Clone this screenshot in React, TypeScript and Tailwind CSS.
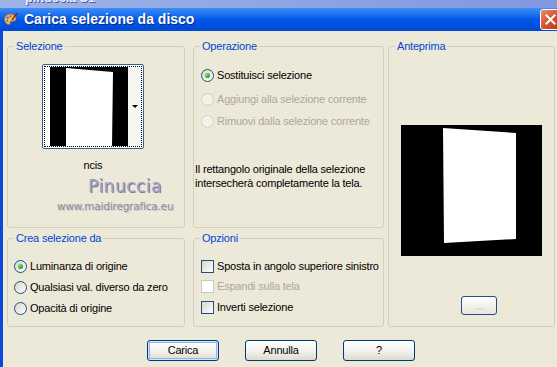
import type { ReactNode } from "react";

const FONT = "font-['Liberation_Sans',Arial,sans-serif]";

function Radio({ checked = false, disabled = false }: { checked?: boolean; disabled?: boolean }) {
  return (
    <span
      className={
        disabled
          ? "flex h-[13px] w-[13px] shrink-0 items-center justify-center rounded-full border border-[#D3D0C2] bg-[#F3F1EA]"
          : "flex h-[13px] w-[13px] shrink-0 items-center justify-center rounded-full border border-[#1C5180] bg-linear-135 from-[#D6D5CC] to-white"
      }
    >
      {checked && <span className="h-[5px] w-[5px] rounded-full bg-[radial-gradient(circle_at_35%_35%,#7FE07F,#21A121_70%)]" />}
    </span>
  );
}

function Check({ disabled = false }: { disabled?: boolean }) {
  return (
    <span
      className={
        disabled
          ? "h-[13px] w-[13px] shrink-0 border border-[#CAC8BB] bg-white"
          : "h-[13px] w-[13px] shrink-0 border border-[#1C5180] bg-linear-135 from-[#D6D5CC] to-white"
      }
    />
  );
}

function Group({ label, className, children }: { label: string; className: string; children?: ReactNode }) {
  return (
    <fieldset className={`min-w-0 rounded-[3px] border border-[#D0D0BF] ${className}`}>
      <legend className="ml-[6px] px-[2px] leading-[13px] text-[#0046D5]">{label}</legend>
      {children}
    </fieldset>
  );
}

function Row({ children, disabled = false, className }: { children: ReactNode; disabled?: boolean; className: string }) {
  return (
    <div className={`flex h-[13px] items-center gap-[3px] leading-[13px] ${disabled ? "text-[#ACA899]" : "text-black"} ${className}`}>
      {children}
    </div>
  );
}

function PaletteIcon() {
  return (
    <svg width={15} height={15} viewBox="0 0 16 16" aria-hidden>
      <path d="M8 2C4 2 1.5 4.6 1.5 8c0 3 2.3 5.5 5 5.5 1.3 0 1.6-.9 1.2-1.8-.4-.9.1-1.7 1.2-1.7h1.6c2.2 0 3.5-1.4 3.5-3.3C14 4 11.5 2 8 2z" fill="#F2B36A" stroke="#9A5A22" strokeWidth={0.8} />
      <circle cx={5} cy={6} r={1.2} fill="#2A6BE8" />
      <circle cx={8} cy={4.6} r={1.1} fill="#E03B2A" />
      <circle cx={4.4} cy={9.4} r={1.1} fill="#39A33A" />
      <path d="M15 1.5 10 8" stroke="#5A3A1A" strokeWidth={1.4} strokeLinecap="round" />
    </svg>
  );
}

function XpButton({ label, isDefault = false }: { label: string; isDefault?: boolean }) {
  return (
    <button
      className={
        isDefault
          ? "h-[21px] w-[72px] rounded-[3px] border border-[#003C74] bg-linear-to-b from-white via-[#F4F3EE] to-[#DEDBD0] leading-[13px] text-black shadow-[inset_0_0_0_1px_#CEE7FF,inset_0_0_0_2px_#8DB2F0]"
          : "h-[21px] w-[72px] rounded-[3px] border border-[#003C74] bg-linear-to-b from-white via-[#F4F3EE] to-[#DEDBD0] leading-[13px] text-black"
      }
    >
      {label}
    </button>
  );
}

export default function App() {
  return (
    <div className={`h-[367px] w-[557px] overflow-hidden bg-[#ECE9D8] text-[11px] tracking-[-0.2px] ${FONT}`}>
      {/* window behind */}
      <div className="h-[8px] overflow-hidden bg-linear-to-r from-[#9FB2E8] via-[#8EA6E4] to-[#7F98E0]">
        <span className="-mt-[10px] ml-[25px] block text-[13px] font-bold leading-[15px] text-[#E8EEFF] [text-shadow:1px_1px_#4A5C9A]">pinuccia S1</span>
      </div>

      {/* title bar */}
      <div className="flex h-[23px] items-center bg-linear-to-b from-[#3C8EF6] via-[#0058E8] to-[#0049D6] pl-[3px]">
        <PaletteIcon />
        <span className="ml-[6px] text-[14px] font-bold tracking-normal text-white [text-shadow:1px_1px_#0A2A8A]">Carica selezione da disco</span>
        <div className="ml-auto -mr-[4px] flex h-[21px] w-[21px] items-center justify-center rounded-[3px] border border-white bg-linear-135 from-[#E88A6A] via-[#D6532C] to-[#B8381A]">
          <svg width={11} height={11} viewBox="0 0 11 11" aria-hidden>
            <path d="M1.5 1.5l8 8M9.5 1.5l-8 8" stroke="white" strokeWidth={2} strokeLinecap="square" />
          </svg>
        </div>
      </div>

      {/* body */}
      <div className="flex h-[336px] flex-col border-l-[3px] border-[#0B47DA] pl-[4px] pt-[9px]">
        <div className="flex">
          {/* left column */}
          <div className="flex w-[178px] flex-col gap-[4px]">
            <Group label="Selezione" className="h-[188px]">
              <div className="ml-[34px] mt-[11px] h-[85px] w-[102px] rounded-[2px] border border-[#3C5E94] bg-white p-[1px]">
                <div className="flex h-full border border-dotted border-black">
                  <svg className="ml-[5px] shrink-0" width={78} height={79} viewBox="0 0 78 79" aria-hidden>
                    <rect width={78} height={79} fill="black" />
                    <polygon points="16,1 63,5 62,79 16,79" fill="white" />
                  </svg>
                  <div className="flex flex-1 items-center justify-center bg-[#F6F6F3] pl-[1px]">
                    <span className="h-0 w-0 border-x-[3px] border-t-[3px] border-x-transparent border-t-black" />
                  </div>
                </div>
              </div>
              <div className="ml-[34px] mt-[10px] w-[102px] text-center leading-[13px]">ncis</div>
              <div className="ml-[80px] mt-[5px] font-['DejaVu_Sans',sans-serif] text-[17px] leading-[18px] tracking-[0.5px] text-[#A4A2C4] [text-shadow:1px_1px_#7A7890]">
                Pinuccia
              </div>
              <div className="ml-[49px] mt-[5px] font-['DejaVu_Sans',sans-serif] text-[10.5px] leading-[13px] tracking-[-0.2px] text-[#8C8C96] [text-shadow:1px_1px_#C8C6D2]">
                www.maidiregrafica.eu
              </div>
            </Group>

            <Group label="Crea selezione da" className="h-[95px]">
              <div className="flex flex-col pl-[6px]">
                <Row className="mt-[15px]">
                  <Radio checked />
                  <span>Luminanza di origine</span>
                </Row>
                <Row className="mt-[8px]">
                  <Radio />
                  <span>Qualsiasi val. diverso da zero</span>
                </Row>
                <Row className="mt-[8px]">
                  <Radio />
                  <span>Opacità di origine</span>
                </Row>
              </div>
            </Group>
          </div>

          {/* middle column */}
          <div className="ml-[8px] flex w-[191px] flex-col gap-[4px]">
            <Group label="Operazione" className="h-[188px]">
              <div className="flex flex-col pl-[7px]">
                <Row className="mt-[16px]">
                  <Radio checked />
                  <span>Sostituisci selezione</span>
                </Row>
                <Row className="mt-[11px]" disabled>
                  <Radio disabled />
                  <span>Aggiungi alla selezione corrente</span>
                </Row>
                <Row className="mt-[9px]" disabled>
                  <Radio disabled />
                  <span>Rimuovi dalla selezione corrente</span>
                </Row>
                <p className="-ml-[6px] mt-[34px] leading-[14px]">
                  Il rettangolo originale della selezione
                  <br />
                  intersecherà completamente la tela.
                </p>
              </div>
            </Group>

            <Group label="Opzioni" className="h-[95px]">
              <div className="flex flex-col pl-[7px]">
                <Row className="mt-[15px]">
                  <Check />
                  <span>Sposta in angolo superiore sinistro</span>
                </Row>
                <Row className="mt-[7px]" disabled>
                  <Check disabled />
                  <span>Espandi sulla tela</span>
                </Row>
                <Row className="mt-[8px]">
                  <Check />
                  <span>Inverti selezione</span>
                </Row>
              </div>
            </Group>
          </div>

          {/* preview */}
          <Group label="Anteprima" className="ml-[4px] h-[287px] w-[167px]">
            <svg className="ml-[12px] mt-[72px] block" width={141} height={131} viewBox="0 0 141 131" aria-hidden>
              <rect width={141} height={131} fill="black" />
              <polygon points="42,3 115,8 115,114 43,118" fill="white" />
            </svg>
            <div className="ml-[72px] mt-[40px] flex h-[19px] w-[36px] items-center justify-center rounded-[3px] border border-[#1C5180] bg-linear-to-b from-white to-[#E6E4DA] text-[12px] font-bold leading-[10px] text-[#DCDAD0]">
              ...
            </div>
          </Group>
        </div>

        {/* buttons */}
        <div className="ml-[140px] mt-[13px] flex gap-[26px]">
          <XpButton label="Carica" isDefault />
          <XpButton label="Annulla" />
          <XpButton label="?" />
        </div>
      </div>
    </div>
  );
}
